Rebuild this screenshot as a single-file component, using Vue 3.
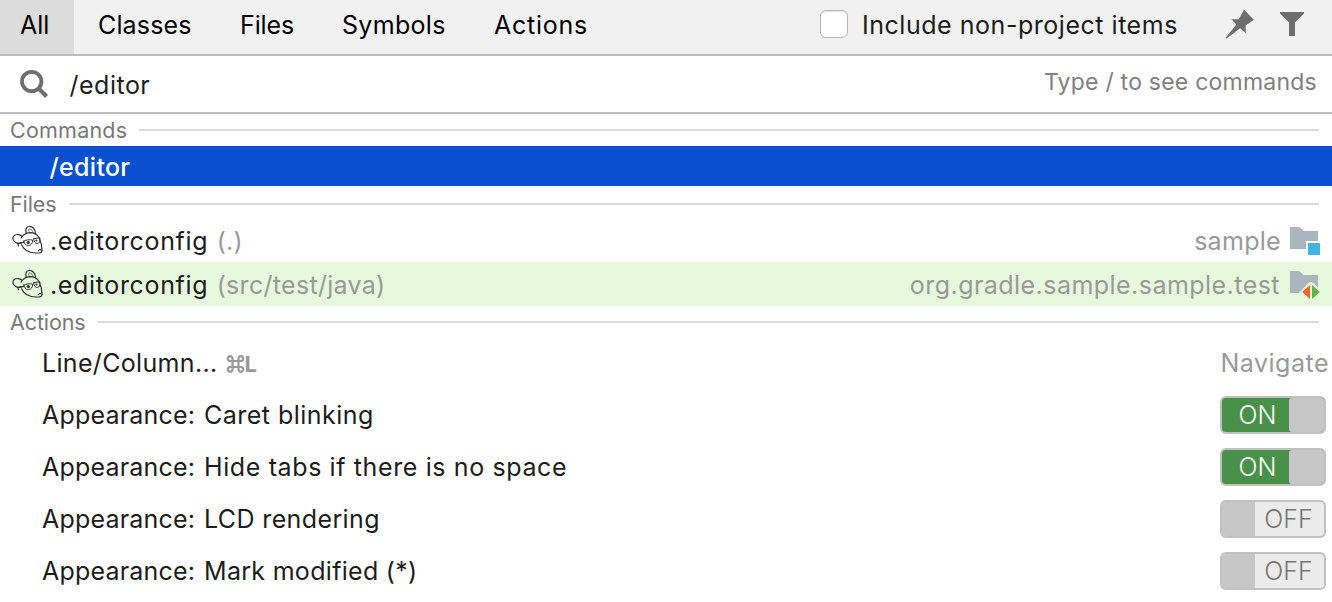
<script setup>
const tabs = [
  { label: 'All', active: true, cls: 'all' },
  { label: 'Classes', cls: 'classes' },
  { label: 'Files', cls: 'files' },
  { label: 'Symbols', cls: 'symbols' },
  { label: 'Actions', cls: 'actions' }
]
const files = [
  { path: '(.)', module: 'sample', test: false },
  { path: '(src/test/java)', module: 'org.gradle.sample.sample.test', test: true }
]
const options = [
  { label: 'Caret blinking', on: true, cls: 'caret' },
  { label: 'Hide tabs if there is no space', on: true, cls: 'hide' },
  { label: 'LCD rendering', on: false, cls: 'lcd' },
  { label: 'Mark modified (*)', on: false, cls: 'mark' }
]
</script>

<template>
  <div class="popup">
    <header class="tabs">
      <div v-for="t in tabs" :key="t.label" class="tab" :class="[t.cls, { active: t.active }]">{{ t.label }}</div>
      <div class="tools">
        <span class="checkbox"></span>
        <span class="include">Include non-project items</span>
        <svg class="pin" width="30" height="30" viewBox="0 0 30 30"><path d="M19 -0.3 28.8 9.8 20.7 15.4V23.2L15.1 18.2 1.6 28.6 0.6 27.8 11.3 14.5 6.4 9.2H13.8Z" fill="#6e6e6e" /></svg>
        <svg class="funnel" width="24" height="24" viewBox="0 0 24 24"><path d="M0 0H24V1.5L15 10.5V24H9V10.5L0 1.5Z" fill="#6e6e6e" /></svg>
      </div>
    </header>
    <div class="search">
      <svg class="lens" width="30" height="30" viewBox="0 0 30 30"><circle cx="11.7" cy="12.5" r="9.7" fill="none" stroke="#6e6e6e" stroke-width="3.8" /><path d="M18.2 19 26.6 27.4" stroke="#6e6e6e" stroke-width="4.2" /></svg>
      <span class="query">/editor</span>
      <span class="hint">Type / to see commands</span>
    </div>
    <div class="section commands"><span>Commands</span><i></i></div>
    <div class="command">/editor</div>
    <div class="section files-section"><span>Files</span><i></i></div>
    <div v-for="f in files" :key="f.path" class="file" :class="{ test: f.test }">
      <svg class="mouse" width="32" height="30" viewBox="0 0 32 30" fill="none" stroke="#333" stroke-width="1.2" stroke-linecap="round" stroke-linejoin="round">
        <path d="M9.6 11C8.2 9.4 4.8 9 2.6 10.2 0.2 11.6.4 15 2.6 16.8 4.6 18.6 7.6 18.5 9.3 17.6" />
        <path d="M9 13C10.8 10 14 8 18 7.6 22 7.6 25.4 9.6 27 12.5 29 16.6 30 20.9 30 25.4 30 27.2 28 28 25 28 18 28.2 12.3 25.6 9.5 19.7" />
        <path d="M14.3 8.4C13.2 4.6 14 2 17 1.5 20.6 1.1 23.2 4.2 23.6 8.4" />
        <path d="M17.4 7.2C16 5.4 16.4 3.8 18 4 19.6 4.3 20.6 5.6 20.8 7.4" stroke-width=".7" />
        <path d="M5.8 18.9 6.5 20.8M6 18.7 12 17.3" />
        <path d="M11.8 16.1C14 14.7 18 14.5 20.6 15.1 20.8 18.3 19 20.5 16.4 20.5 13.8 20.5 12 18.6 11.8 16.1ZM21.6 13.7 27.8 12.8C28.4 16.3 27.4 18.5 25.3 18.5 23 18.5 21.6 16.3 21.6 13.7Z" stroke-width="1" />
        <circle cx="16.3" cy="17.5" r="1.6" fill="#333" stroke="none" /><circle cx="24.4" cy="15.5" r="1.1" fill="#333" stroke="none" />
        <path d="M26.3 25.8C27 24.4 29 24.2 29.8 25.2" />
      </svg>
      <span class="name">.editorconfig</span><span class="path">{{ f.path }}</span>
      <span class="module">{{ f.module }}</span>
      <svg class="folder" width="32" height="30" viewBox="0 0 32 30">
        <path d="M0 2H8Q9.5 2 10.5 3L13.5 6H28V24H0Z" fill="#aab6be" />
        <template v-if="!f.test"><path d="M16 16H30V24H16Z" fill="#fff" /><path d="M18 18H30V30H18Z" fill="#42b4e2" /></template>
        <template v-else><path d="M9 24 18 14.5Q21 11.5 24 14.5L32 22.5V30H9Z" fill="#e6f9dc" /><path d="M12.3 23 20 16V30Z" fill="#f26522" /><path d="M22 16 29.7 23 22 30Z" fill="#62b543" /></template>
      </svg>
    </div>
    <div class="section actions-section"><span>Actions</span><i></i></div>
    <div class="action line">
      <span class="linecol">Line/Column...</span>
      <span class="shortcut"><svg width="19" height="18" viewBox="0 0 18 18" fill="none" stroke="#999" stroke-width="2.2"><path d="M6 6H12V12H6ZM6 6H3.8A2.4 2.4 0 1 1 6 3.6ZM12 6V3.6A2.4 2.4 0 1 1 14.2 6ZM12 12H14.2A2.4 2.4 0 1 1 12 14.4ZM6 12V14.4A2.4 2.4 0 1 1 3.8 12Z" /></svg><b>L</b></span>
      <span class="navigate">Navigate</span>
    </div>
    <div v-for="o in options" :key="o.label" class="action">
      <span class="prefix">Appearance:</span><span class="option" :class="o.cls">{{ o.label }}</span>
      <span class="switch" :class="{ on: o.on }"><span class="state">{{ o.on ? 'ON' : 'OFF' }}</span><span class="knob"></span></span>
    </div>
  </div>
</template>

<style>
body { margin: 0; background: #fff; overflow: hidden; }
</style>
<style scoped>
.popup { width: 1332px; height: 602px; overflow: hidden; background: #fff; color: #1c1c1c; font: 430 25px/30px Inter, "Liberation Sans", sans-serif; white-space: nowrap; }
.tabs { display: flex; height: 54px; background: #f1f1f1; border-bottom: 2px solid #bcbcbc; color: #000; }
.tab { box-sizing: border-box; height: 54px; padding: 10px 0 0 24px; width: 102px; }
.tab.all { width: 74px; padding-left: 20px; background: #dcdcdc; }
.tab.files { letter-spacing: -0.1px; }
.tab.symbols { width: 152px; letter-spacing: 0.3px; }
.tab.classes { width: 142px; letter-spacing: 0.15px; }
.tab.actions { width: 141px; letter-spacing: 0.75px; }
.tools { display: flex; flex: 1; padding: 10px 0 0 209px; color: #1c1c1c; }
.checkbox { box-sizing: border-box; flex: none; width: 28px; height: 28px; border: 1px solid #b5b5b5; border-radius: 6px; background: #fff; box-shadow: inset 0 1px 1px #e4e4e4; }
.include { flex: none; margin-left: 14px; width: 363px; letter-spacing: 0.53px; }
.pin { flex: none; }
.funnel { flex: none; margin: 2px 0 0 25px; }
.search { display: flex; height: 56px; border-bottom: 2px solid #bcbcbc; }
.lens { margin: 13px 0 0 20px; flex: none; }
.query { margin: 14px 0 0 19.5px; letter-spacing: 0.5px; }
.hint { margin: 11px 15px 0 auto; font-size: 23px; letter-spacing: 0.23px; color: #808080; }
.section { display: flex; box-sizing: border-box; align-items: center; height: 32px; padding: 0 13px 0 10px; font-size: 21.5px; color: #787878; }
.commands { letter-spacing: 0.22px; }
.files-section { padding-top: 4px; }
.files-section, .actions-section { letter-spacing: -0.1px; }
.section i { flex: 1; height: 2px; margin-left: 12px; background: #dadada; }
.command { height: 40px; line-height: 42px; padding-left: 49.5px; background: #0850d0; color: #fff; font-weight: 500; letter-spacing: 0.3px; }
.file { display: flex; align-items: center; height: 44px; }
.file.test { background: #e6f9dc; }
.mouse { margin-left: 11.5px; }
.name { margin: 2px 0 0 6.5px; letter-spacing: 0.65px; }
.path { margin: 2px 0 0 8.5px; letter-spacing: 0.3px; color: #999; }
.module { margin: 2px 0 0 auto; letter-spacing: 0.3px; color: #999; }
.test .module { letter-spacing: 0.46px; }
.folder { margin: 0 10px 0 9px; }
.test .folder { margin-left: 10px; }
.action { display: flex; box-sizing: border-box; align-items: center; height: 52px; padding: 0 6px 2px 42px; }
.line { padding-right: 3px; }
.linecol { letter-spacing: 0.33px; }
.shortcut { display: flex; align-items: center; margin: 2px 0 0 8px; color: #999; font-size: 22px; }
.navigate { margin-left: auto; letter-spacing: 0.5px; color: #999; }
.prefix { width: 152px; letter-spacing: 0.2px; }
.option { margin-left: 10px; }
.caret { letter-spacing: 0.48px; }
.hide { letter-spacing: 0.62px; }
.lcd { letter-spacing: 0.38px; }
.mark { letter-spacing: 0.3px; }
.switch { display: flex; box-sizing: border-box; width: 106.5px; height: 38px; margin-left: auto; border: 2px solid #c0c0c0; border-radius: 6px; background: #ebebeb; flex-direction: row-reverse; overflow: hidden; color: #777; font-weight: 300; }
.switch.on { flex-direction: row; background: #499149; color: #fff; }
.state { box-sizing: border-box; width: 69px; padding-right: 2px; text-align: center; line-height: 34px; }
.on .state { width: 67px; padding: 0 0 0 5px; }
.knob { flex: 1; background: #c7c7c7; }
.on .knob { border-radius: 3px 0 0 3px; }
</style>
